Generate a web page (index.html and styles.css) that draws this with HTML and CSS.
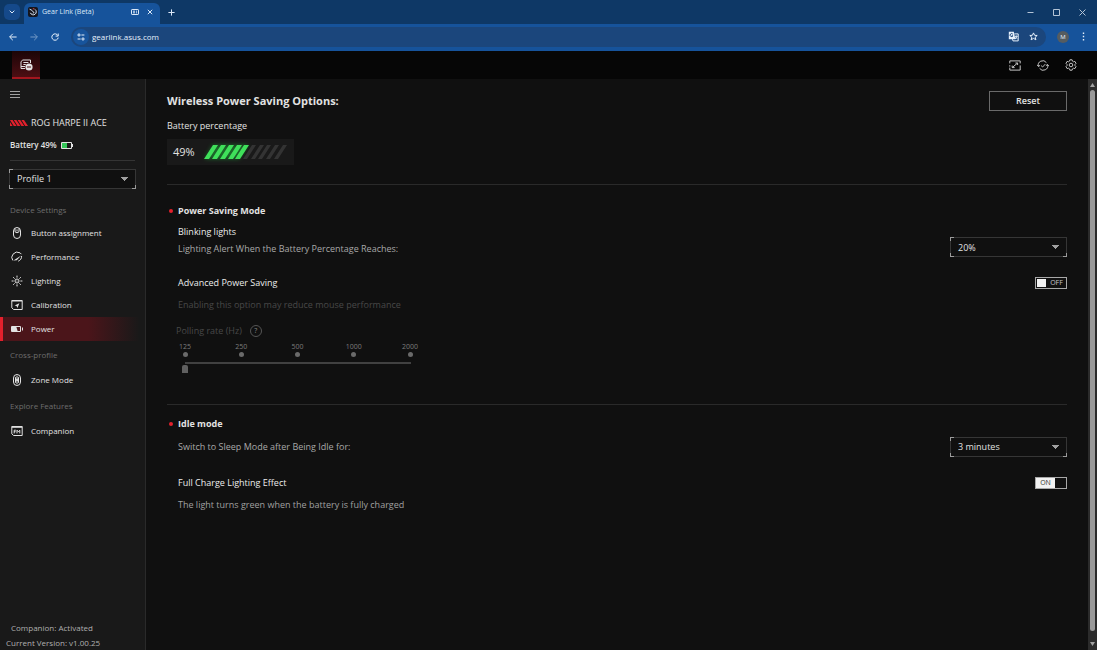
FILE: index.html
```html
<!DOCTYPE html>
<html lang="en">
<head>
    <meta charset="UTF-8">
    <meta name="viewport" content="width=device-width, initial-scale=1.0">
    <title>Gear Link (Beta)</title>
    <link rel="stylesheet" href="styles.css">
</head>
<body>

    <!-- Browser window -->
    <div class="tabstrip">
        <button class="tab-search" aria-label="Search tabs">
            <svg width="6" height="4" viewBox="0 0 6 4"><path d="M.7.7 3 3 5.3.7"/></svg>
        </button>
        <div class="tab">
            <svg class="favicon" width="10" height="10" viewBox="0 0 10 10">
                <rect width="10" height="10" rx="2"/>
                <path d="M1.6 2.2 4.4 3.6M7 2.4a3 3 0 1 1-4.6 3.4M4.4 4.4 6 5.4 5 6.6"/>
                <path class="red" d="M4.8 1.8h1.6"/>
            </svg>
            <span class="tab-title">Gear Link (Beta)</span>
            <svg class="tab-device" width="8" height="6" viewBox="0 0 8 6"><rect x=".5" y=".5" width="7" height="5" rx=".6"/><path d="M2 2.2h2M2 3.8h2M5 2.2h1M5 3.8h1"/></svg>
            <button class="icon-btn" aria-label="Close tab">
                <svg width="6" height="6" viewBox="0 0 6 6"><path d="m.8.8 4.4 4.4M5.2.8.8 5.2"/></svg>
            </button>
        </div>
        <button class="icon-btn new-tab" aria-label="New tab">
            <svg width="7" height="7" viewBox="0 0 7 7"><path d="M3.5.4v6.2M.4 3.5h6.2"/></svg>
        </button>
        <div class="window-buttons">
            <button class="icon-btn" aria-label="Minimize"><svg width="7" height="7" viewBox="0 0 7 7"><path d="M.5 3.5h6"/></svg></button>
            <button class="icon-btn" aria-label="Maximize"><svg width="7" height="7" viewBox="0 0 7 7"><path d="M.5.5h6v6h-6z"/></svg></button>
            <button class="icon-btn" aria-label="Close"><svg width="7" height="7" viewBox="0 0 7 7"><path d="m.5.5 6 6M6.5.5l-6 6"/></svg></button>
        </div>
    </div>

    <div class="toolbar">
        <button class="icon-btn" aria-label="Back"><svg width="8" height="8" viewBox="0 0 8 8"><path d="M7.6 4H.8M3.8.8.6 4l3.2 3.2"/></svg></button>
        <button class="icon-btn dim" aria-label="Forward"><svg width="8" height="8" viewBox="0 0 8 8"><path d="M.4 4h6.8M4.2.8 7.4 4 4.2 7.2"/></svg></button>
        <button class="icon-btn" aria-label="Reload"><svg width="8" height="8" viewBox="0 0 8 8"><path d="M6.9 2.6A3.2 3.2 0 1 0 7.2 4.6M7.2.5v2.6H4.6"/></svg></button>
        <div class="address">
            <button class="site-info" aria-label="Site information"><svg width="8" height="8" viewBox="0 0 8 8"><circle cx="2" cy="2" r="1.1"/><path d="M4.4 2h3M.6 6h3"/><circle cx="6" cy="6" r="1.1"/></svg></button>
            <input type="text" class="url" aria-label="Address" value="gearlink.asus.com">
            <button class="icon-btn" aria-label="Translate"><svg width="11" height="11" viewBox="0 0 11 11"><path class="fill" d="M.8.8h5l1.6 7.4H.8z"/><path d="M6.4 2.9h3.8v7H5l-.6-1.7M7 5.3h2.6M8.4 4.6v.7M9 5.4 7 8M7.6 6.2l1.8 1.6"/><path class="cut" d="M4.8 3.2a1.5 1.5 0 1 0 .1 1.6H3.7"/></svg></button>
            <button class="icon-btn" aria-label="Bookmark this tab"><svg width="9" height="9" viewBox="0 0 9 9"><path d="m4.5.9 1.1 2.4 2.6.2-2 1.7.7 2.6-2.4-1.4-2.4 1.4.7-2.6-2-1.7 2.6-.2z"/></svg></button>
        </div>
        <button class="avatar" aria-label="Profile">M</button>
        <button class="icon-btn" aria-label="Browser menu"><svg class="dots" width="3" height="9" viewBox="0 0 3 9"><path d="M.8.6h1.4V2H.8zM.8 3.8h1.4v1.4H.8zM.8 7h1.4v1.4H.8z"/></svg></button>
    </div>

    <!-- App header -->
    <header class="app-header">
        <button class="device-tab" aria-label="Connected device">
            <svg width="13" height="12" viewBox="0 0 13 12"><path d="M5 9.5H1V2.6L2.8 1h7.7v3M3.4 3.5h5M3.4 5.5h2.4M1 7.5h4"/><circle class="fill" cx="9" cy="8" r="3.6"/><path class="cut" d="M7 8h4"/></svg>
        </button>
        <div class="header-actions">
            <button class="icon-btn" aria-label="Screen"><svg width="12" height="11" viewBox="0 0 12 11"><path d="M.8 3.4V.9h10.4v2.5M.8 7.6v2.5h10.4V5.4M.8 5.2v1.4"/><path d="m3.4 7.4 5-4.2M6.4 3h2.2v2M5.6 7.6H3.2v-2"/></svg></button>
            <button class="icon-btn" aria-label="Updates"><svg width="12" height="11" viewBox="0 0 12 11"><path d="M1.4 6.4A4.5 4.5 0 0 1 9.4 2.6M10.6 4.6A4.5 4.5 0 0 1 2.6 8.4M.2 4.9l1.3 1.6 1.6-1.2M11.8 6.1l-1.3-1.6-1.6 1.2M4.1 5.6l1.5 1.4 2.7-2.9"/></svg></button>
            <button class="icon-btn" aria-label="Settings"><svg width="12" height="12" viewBox="0 0 12 12"><path d="m4.9.8-.4 1.4-1 .6-1.4-.4L1 4.4l1 1v1.2l-1 1 1.1 2 1.4-.4 1 .6.4 1.4h2.2l.4-1.4 1-.6 1.4.4 1.1-2-1-1V5.4l1-1-1.1-2-1.4.4-1-.6L7.1.8z"/><circle cx="6" cy="6" r="1.8"/></svg></button>
        </div>
    </header>

    <div class="app">
        <aside class="sidebar">
            <button class="icon-btn menu-btn" aria-label="Toggle menu"><svg width="10" height="7" viewBox="0 0 10 7"><path d="M0 .5h10M0 3.5h10M0 6.5h10"/></svg></button>

            <div class="device">
                <svg width="18" height="6" viewBox="0 0 18 6"><path d="M0 0h2.6l4 6H3.8zM3.8 0h2.6l4 6H7.6zM7.6 0h2.6l4 6h-2.8zM11.4 0H14l4 6h-2.8zM0 2l2.6 4H0z"/></svg>
                <span>ROG HARPE II ACE</span>
            </div>
            <div class="battery-line">
                <span>Battery 49%</span>
                <svg width="12" height="7" viewBox="0 0 12 7"><path class="case" d="M.5.5h10v6H.5zM11.5 2v3"/><path class="charge" d="M1 1h5v5H1z"/></svg>
            </div>

            <div class="profile">
                <select class="select" aria-label="Profile">
                    <option>Profile 1</option>
                    <option>Profile 2</option>
                </select>
            </div>

            <nav>
                <h2>Device Settings</h2>
                <a href="#button"><svg width="12" height="12" viewBox="0 0 12 12"><path d="M2.5 4a3.5 3.5 0 0 1 7 0v4a3.5 3.5 0 0 1-7 0zM4 1.4v3.4l2 1 2-1V1.4M6 2.4v2"/></svg>Button assignment</a>
                <a href="#performance"><svg width="12" height="12" viewBox="0 0 12 12"><path d="M1.8 9.4A5 5 0 0 1 2 3.2a5.6 5.6 0 0 1 7-1.4l1.4 1.4M10.6 5c.2 2.4-1.2 4.4-3.4 5.2"/><path class="fill" d="m2.4 9.4 7.8-4.8-4.4 4.6z"/></svg>Performance</a>
                <a href="#lighting"><svg width="12" height="12" viewBox="0 0 12 12"><circle cx="6" cy="6" r="2"/><circle class="fill" cx="6" cy="6" r=".6"/><path d="M6 .6v2M6 9.4v2M.6 6h2M9.4 6h2M2.2 2.2l1.4 1.4M8.4 8.4l1.4 1.4M9.8 2.2 8.4 3.6M3.6 8.4 2.2 9.8"/></svg>Lighting</a>
                <a href="#calibration"><svg width="12" height="12" viewBox="0 0 12 12"><path d="M.8 1.5h10.4v9H2.6L.8 8.8z"/><path class="fill" d="M.8 1.2h10.4v1.4H.8zM8.4 4.2 3.6 6.4l2 .6.8 2z"/></svg>Calibration</a>
                <a href="#power" class="active"><svg width="12" height="12" viewBox="0 0 12 12"><path d="M.5 3.5h9v5h-9zM11.5 4.5v3"/><path class="fill" d="M1 4h4.4l1.4 4.5H1z"/></svg>Power</a>

                <h2>Cross-profile</h2>
                <a href="#zone"><svg width="12" height="12" viewBox="0 0 12 12"><path d="M2.5 4a3.5 3.5 0 0 1 7 0v4a3.5 3.5 0 0 1-7 0z"/><path d="M4.5 3.2v5.6M6 1.8v8.4M7.5 3.2v5.6M4.5 5.2l3 1.8M7.5 4.4l-3 2.6"/></svg>Zone Mode</a>

                <h2>Explore Features</h2>
                <a href="#companion"><svg width="12" height="12" viewBox="0 0 12 12"><path d="M.8 1.5h10.4v9H2.6L.8 8.8z"/><path class="fill" d="M.8 1.2h10.4v1.6H.8z"/><path d="M3.2 8.4V5.2h1.6M3.2 6.7h1.4M6 8.4V5.2l1.4 1.6 1.4-1.6v3.2"/></svg>Companion</a>
            </nav>

            <footer>
                <p>Companion: Activated</p>
                <p>Current Version: v1.00.25</p>
            </footer>
        </aside>

        <main>
            <div class="page-title">
                <h1>Wireless Power Saving Options:</h1>
                <button class="reset">Reset</button>
            </div>
            <p class="battery-label">Battery percentage</p>
            <div class="battery">
                <span>49%</span>
                <svg width="90" height="22" viewBox="0 0 90 22">
                    <path class="glow" d="M11 4h35l-9 14H3z"/>
                    <path class="on" d="M11 4h5L7 18H2zM19 4h5l-9 14h-5zM27 4h5l-9 14h-5zM35 4h5l-9 14h-5zM42 4h5l-9 14h-5z"/>
                    <path class="off" d="M50 4h4l-9 14h-4zM58 4h4l-9 14h-4zM65 4h4l-9 14h-4zM73 4h4l-9 14h-4zM81 4h4l-9 14h-4z"/>
                </svg>
            </div>

            <section class="power-saving">
                <h3>Power Saving Mode</h3>
                <div class="row blinking">
                    <div>
                        <h4>Blinking lights</h4>
                        <label for="alert">Lighting Alert When the Battery Percentage Reaches:</label>
                    </div>
                    <select class="select" id="alert">
                        <option>20%</option>
                        <option>15%</option>
                        <option>10%</option>
                    </select>
                </div>
                <div class="row">
                    <h4>Advanced Power Saving</h4>
                    <label class="switch">
                        <input type="checkbox" aria-label="Advanced Power Saving">
                        <i></i><span>OFF</span>
                    </label>
                </div>
                <p class="hint disabled">Enabling this option may reduce mouse performance</p>

                <div class="polling">
                    <div class="polling-head">
                        <label for="polling">Polling rate (Hz)</label>
                        <button class="help" aria-label="Help">?</button>
                    </div>
                    <div class="ticks">
                        <span>125</span>
                        <span>250</span>
                        <span>500</span>
                        <span>1000</span>
                        <span>2000</span>
                    </div>
                    <input type="range" id="polling" min="0" max="4" value="0" disabled>
                </div>
            </section>

            <section>
                <h3>Idle mode</h3>
                <div class="row">
                    <label for="idle">Switch to Sleep Mode after Being Idle for:</label>
                    <select class="select" id="idle">
                        <option>3 minutes</option>
                        <option>5 minutes</option>
                        <option>10 minutes</option>
                    </select>
                </div>
                <div class="row">
                    <h4>Full Charge Lighting Effect</h4>
                    <label class="switch">
                        <input type="checkbox" aria-label="Full Charge Lighting Effect" checked>
                        <span>ON</span><i></i>
                    </label>
                </div>
                <p class="hint">The light turns green when the battery is fully charged</p>
            </section>
        </main>

        <!-- Page scrollbar -->
        <div class="scrollbar">
            <svg width="5" height="4" viewBox="0 0 5 4"><path d="M2.5 0 5 4H0z"/></svg>
            <div class="thumb"></div>
            <svg width="5" height="4" viewBox="0 0 5 4"><path d="M0 0h5L2.5 4z"/></svg>
        </div>
    </div>

</body>
</html>
```

FILE: styles.css
```css
* {
    box-sizing: border-box;
    margin: 0;
    padding: 0;
}

body {
    display: flex;
    flex-direction: column;
    min-height: 100vh;
    background-color: #101010;
    color: #e2e2e2;
    font-family: "Segoe UI", "Open Sans", "Noto Sans", sans-serif;
    font-size: 9px;
    line-height: 16px;
}

button, input, select {
    font: inherit;
    color: inherit;
    background: none;
    border: none;
}

svg {
    display: block;
    flex: none;
    fill: none;
    stroke: currentColor;
    stroke-width: 1;
}

.icon-btn {
    display: flex;
    align-items: center;
    justify-content: center;
}

.fill {
    fill: currentColor;
    stroke: none;
}

/* Browser window */
.tabstrip {
    display: flex;
    align-items: center;
    height: 24px;
    padding-left: 4px;
    background-color: #0e3866;
    color: #dce9f8;
}

.tab-search {
    display: flex;
    align-items: center;
    justify-content: center;
    width: 16px;
    height: 16px;
    border-radius: 5px;
    background-color: #15498a;
}

.tab {
    display: flex;
    align-items: center;
    align-self: flex-end;
    width: 136px;
    height: 21px;
    margin-left: 4px;
    padding: 0 7px 3px 4px;
    border-radius: 6px 6px 0 0;
    background-color: #16539b;
}

.favicon {
    margin-right: 4px;
}

.favicon rect {
    fill: #15151c;
    stroke: none;
}

.favicon .red {
    stroke: #e05050;
}

.tab-title {
    flex: 1;
    font-size: 7px;
}

.tab-device {
    margin-right: 8px;
}

.new-tab {
    margin-left: 8px;
}

.window-buttons {
    display: flex;
    gap: 19px;
    margin-left: auto;
    padding-right: 11px;
    color: #b4c4d6;
}

.toolbar {
    display: flex;
    align-items: center;
    gap: 13px;
    height: 27px;
    padding: 0 12px 2px 9px;
    background-color: #16539b;
    color: #e6f0fb;
}

.dim {
    opacity: .45;
}

.address {
    display: flex;
    flex: 1;
    align-items: center;
    gap: 10px;
    height: 20px;
    margin: 0 -2px 0 -1px;
    padding: 0 8px 0 2px;
    border-radius: 10px;
    background-color: #1b467c;
}

.site-info {
    display: flex;
    align-items: center;
    justify-content: center;
    width: 16px;
    height: 16px;
    margin-right: -7px;
    border-radius: 8px;
    background-color: #17549c;
}

.url {
    flex: 1;
    font-size: 8px;
    outline: none;
}

.cut {
    stroke: #1b467c;
}

.avatar {
    width: 12px;
    height: 12px;
    border-radius: 6px;
    background-color: #555c60;
    font-size: 6px;
    line-height: 12px;
}

.dots {
    fill: currentColor;
    stroke: none;
}

/* App header */
.app-header {
    display: flex;
    justify-content: space-between;
    height: 28px;
    padding: 0 20px 0 12px;
    background-color: #060606;
}

.device-tab {
    display: flex;
    align-items: center;
    justify-content: center;
    width: 28px;
    padding-top: 2px;
    border-bottom: 2px solid #a3161e;
    background-image: linear-gradient(#1b0507, #4d0e13);
}

.device-tab .cut {
    stroke: #4d0e13;
}

.header-actions {
    display: flex;
    align-items: center;
    gap: 16px;
    color: #c4c4c4;
}

.app {
    display: flex;
    flex: 1;
}

/* Sidebar */
.sidebar {
    display: flex;
    flex-direction: column;
    flex: none;
    width: 146px;
    border-right: 1px solid #2a2a2a;
    background-color: #191919;
}

.menu-btn {
    width: 10px;
    margin: 12px 10px 17px;
    color: #a0a0a0;
}

.device {
    display: flex;
    align-items: center;
    gap: 3px;
    margin: 0 10px 6px;
}

.device svg {
    fill: #e3202c;
    stroke: none;
}

.battery-line {
    display: flex;
    align-items: center;
    gap: 4px;
    margin: 0 10px;
    padding-bottom: 7px;
    border-bottom: 1px solid #343434;
    font-size: 8px;
    font-weight: 600;
}

.charge {
    fill: #35c759;
    stroke: none;
}

.select {
    width: 117px;
    height: 20px;
    padding: 0 7px;
    border: 1px solid rgba(255, 255, 255, .16);
    appearance: none;
    /* the arrow and the lit corners */
    background:
        conic-gradient(from -45deg at 50% 100%, #a0a0a0 90deg, transparent 0) right 8px center / 7px 4px,
        linear-gradient(#888, #888) 0 0 / 4px 1px,
        linear-gradient(#888, #888) 0 0 / 1px 4px,
        linear-gradient(#888, #888) 0 100% / 4px 1px,
        linear-gradient(#888, #888) 0 100% / 1px 4px,
        linear-gradient(#888, #888) 100% 100% / 4px 1px,
        linear-gradient(#888, #888) 100% 100% / 1px 4px,
        #101010;
    background-origin: border-box;
    background-repeat: no-repeat;
}

.profile {
    margin: 8px 9px 13px;
}

.profile .select {
    width: 100%;
}

nav h2 {
    padding: 0 10px;
    color: #6d6d6d;
    font-size: 8px;
    font-weight: 400;
}

nav a {
    display: flex;
    align-items: center;
    gap: 8px;
    height: 24px;
    padding-left: 11px;
    color: #e2e2e2;
    font-size: 8px;
    text-decoration: none;
}

nav h2 + a {
    margin-top: 3px;
}

nav a + h2 {
    margin-top: 6px;
}

nav a + h2 + a {
    margin-top: 5px;
}

nav .active {
    padding-left: 8px;
    border-left: 3px solid #e3202c;
    background-image: linear-gradient(90deg, #4b151a 60%, #191919 96%);
}

.sidebar footer {
    margin-top: auto;
    padding: 0 6px;
    color: #b0b0b0;
    font-size: 8px;
    line-height: 15px;
}

.sidebar footer p:first-child {
    padding-left: 5px;
}

/* Content */
main {
    flex: 1;
    padding: 12px 21px;
}

.page-title, .row {
    display: flex;
    align-items: center;
    justify-content: space-between;
}

h1 {
    font-size: 11px;
    font-weight: 700;
}

.reset {
    width: 78px;
    height: 20px;
    border: 1px solid #6a6a6a;
    font-weight: 600;
    line-height: 18px;
}

.battery-label {
    margin: 7px 0 5px;
}

.battery {
    display: flex;
    align-items: center;
    gap: 7px;
    width: 127px;
    height: 26px;
    padding-left: 6px;
    background-color: #191919;
    font-size: 11px;
}

.battery svg {
    stroke: none;
}

.glow {
    fill: #1d9a35;
    filter: blur(2px);
    opacity: .6;
}

.on {
    fill: #3fe05a;
}

.off {
    fill: #333;
}

section {
    padding: 11px 0 18px 11px;
    border-top: 1px solid #2a2a2a;
}

.power-saving {
    margin-top: 19px;
    padding-top: 18px;
    padding-bottom: 30px;
}

h3, h4 {
    font-size: 9px;
}

h3 {
    position: relative;
    font-weight: 700;
}

h3::before {
    content: "";
    position: absolute;
    top: 6px;
    left: -9px;
    width: 4px;
    height: 4px;
    border-radius: 2px;
    background-color: #e3202c;
}

h4 {
    font-weight: 400;
    color: #ececec;
}

.row {
    margin-top: 5px;
    color: #a8a8a8;
}

.row .select {
    color: #e2e2e2;
}

.blinking {
    align-items: flex-end;
    margin-top: 4px;
    line-height: 17px;
}

.row + .row {
    margin-top: 18px;
}

.switch {
    display: flex;
    align-items: center;
    position: relative;
    width: 32px;
    height: 12px;
    border: 1px solid #a8a8a8;
    font-size: 7px;
    line-height: 10px;
    color: #c8c8c8;
}

.switch input {
    position: absolute;
    inset: 0;
    opacity: 0;
}

.switch i {
    width: 9px;
    height: 8px;
    margin: 1px;
    background-color: #f2f2f2;
}

.switch span {
    flex: 1;
    text-align: center;
}

.switch input:checked + span {
    background-color: #f2f2f2;
    color: #333;
}

.switch span + i {
    background: none;
}

.hint {
    margin-top: 6px;
    color: #a0a0a0;
}

.disabled, .polling {
    color: #484848;
}

.polling {
    width: 250px;
    margin: 10px 0 0 -2px;
}

.polling-head {
    display: flex;
    align-items: center;
    gap: 8px;
}

.help {
    width: 12px;
    height: 12px;
    border: 1px solid #555;
    border-radius: 6px;
    color: #8a8a8a;
    font-size: 7px;
    line-height: 10px;
}

.ticks {
    display: flex;
    justify-content: space-between;
    width: 253px;
    margin: 3px 0 0 -5px;
    color: #7c7c7c;
    font-size: 7px;
    line-height: 10px;
}

.ticks span {
    width: 28px;
    text-align: center;
}

.ticks span::after {
    content: "";
    display: block;
    width: 5px;
    height: 5px;
    margin: 0 auto;
    border-radius: 3px;
    background-color: #6a6a6a;
}

input[type="range"] {
    display: block;
    width: 232px;
    height: 12px;
    margin: 5px 0 0 6px;
    appearance: none;
    background: linear-gradient(#414141, #414141) 3px 0 / 226px 2px no-repeat;
}

input[type="range"]::-webkit-slider-thumb {
    appearance: none;
    width: 6px;
    height: 8px;
    margin-top: 2px;
    border-radius: 2px 2px 0 0;
    background-color: #606060;
}

/* Scrollbar */
.scrollbar {
    display: flex;
    flex-direction: column;
    align-items: center;
    gap: 3px;
    width: 9px;
    padding: 4px 0;
    background-color: #2b2b2b;
}

.scrollbar svg {
    fill: #a0a0a0;
    stroke: none;
}

.thumb {
    flex: 1;
    width: 5px;
    margin-bottom: 8px;
    border-radius: 3px;
    background-color: #9a9a9a;
}
```
